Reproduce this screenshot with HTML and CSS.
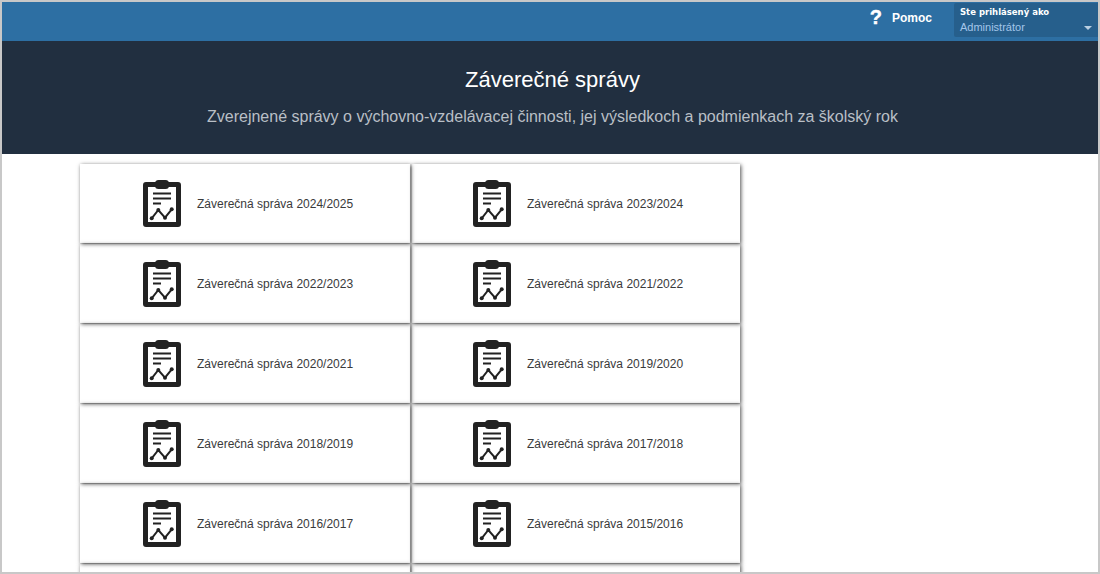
FILE: index.html
```html
<!DOCTYPE html>
<html lang="sk">
<head>
<meta charset="utf-8">
<title>Záverečné správy</title>
<link rel="stylesheet" href="styles.css">
</head>
<body>
<svg class="defs" width="0" height="0" aria-hidden="true">
  <symbol id="report" viewBox="0 0 38 47">
    <path fill="#222" fill-rule="evenodd" d="M3 2h32a3 3 0 0 1 3 3v39a3 3 0 0 1-3 3H3a3 3 0 0 1-3-3V5a3 3 0 0 1 3-3zM5 7v35h28V7z"/>
    <rect x="12" y="0" width="14" height="9" rx="3.500" fill="#222"/>
    <path fill="#222" d="M10 12.500h18v2H10zM10 17.500h18v2H10zM10 22.500h8v2h-8z"/>
    <path fill="none" stroke="#222" stroke-width="2" d="M8.700 38.300l6.600-8.300 6.700 7.700 6.700-8.400"/>
    <circle cx="8.700" cy="38.300" r="2" fill="#222"/><circle cx="15.300" cy="30" r="2" fill="#222"/><circle cx="22" cy="37.700" r="2" fill="#222"/><circle cx="28.700" cy="29.300" r="2" fill="#222"/>
  </symbol>
</svg>
<div class="frame">
  <header class="topbar">
    <a class="help"><span class="help-mark">?</span><span>Pomoc</span></a>
    <div class="user">
      <div class="user-label">Ste prihlásený ako</div>
      <div class="user-role">Administrátor</div>
      <span class="caret"></span>
    </div>
  </header>
  <section class="hero">
    <h1>Záverečné správy</h1>
    <p>Zverejnené správy o výchovno-vzdelávacej činnosti, jej výsledkoch a podmienkach za školský rok</p>
  </section>
  <main class="grid">
    <a class="card"><svg class="icon"><use href="#report"/></svg><span>Záverečná správa 2024/2025</span></a>
    <a class="card"><svg class="icon"><use href="#report"/></svg><span>Záverečná správa 2023/2024</span></a>
    <a class="card"><svg class="icon"><use href="#report"/></svg><span>Záverečná správa 2022/2023</span></a>
    <a class="card"><svg class="icon"><use href="#report"/></svg><span>Záverečná správa 2021/2022</span></a>
    <a class="card"><svg class="icon"><use href="#report"/></svg><span>Záverečná správa 2020/2021</span></a>
    <a class="card"><svg class="icon"><use href="#report"/></svg><span>Záverečná správa 2019/2020</span></a>
    <a class="card"><svg class="icon"><use href="#report"/></svg><span>Záverečná správa 2018/2019</span></a>
    <a class="card"><svg class="icon"><use href="#report"/></svg><span>Záverečná správa 2017/2018</span></a>
    <a class="card"><svg class="icon"><use href="#report"/></svg><span>Záverečná správa 2016/2017</span></a>
    <a class="card"><svg class="icon"><use href="#report"/></svg><span>Záverečná správa 2015/2016</span></a>
    <a class="card"></a>
    <a class="card"></a>
  </main>
</div>
</body>
</html>
```

FILE: styles.css
```css
html, body { margin: 0; padding: 0; background: #fff; }
body { font-family: "Liberation Sans", Arial, sans-serif; }
.defs { position: absolute; }
.frame {
  box-sizing: border-box;
  width: 1100px;
  height: 574px;
  border: 2px solid #c8c8c8;
  overflow: hidden;
  background: #fff;
}
.topbar {
  height: 39px;
  background: #2d6fa3;
  display: flex;
  justify-content: flex-end;
  box-sizing: border-box;
  padding: 1px 0 0;
}
.help {
  display: flex;
  align-items: center;
  gap: 10px;
  height: 29px;
  margin-right: 22px;
  color: #fff;
  font-size: 12px;
  font-weight: bold;
}
.help-mark { font-size: 20px; -webkit-text-stroke: 0.4px #fff; }
.user {
  position: relative;
  box-sizing: border-box;
  width: 144px;
  height: 34px;
  background: #265f8c;
  border-radius: 2px 0 0 2px;
  padding: 3px 0 0 6px;
}
.user-label {
  color: #fff;
  font-family: "DejaVu Sans", sans-serif;
  font-size: 8.500px;
  font-weight: bold;
  line-height: 13px;
}
.user-role {
  color: #a4c6ea;
  font-size: 11px;
  line-height: 15px;
  margin-top: 1px;
}
.caret {
  position: absolute;
  right: 6px;
  bottom: 7px;
  border-left: 4px solid transparent;
  border-right: 4px solid transparent;
  border-top: 4px solid #b9cfe2;
}
.hero {
  height: 113px;
  box-sizing: border-box;
  background: #212f40;
  text-align: center;
  padding: 26px 0 0 5px;
}
.hero h1 {
  margin: 0;
  color: #fff;
  font-size: 22px;
  font-weight: normal;
  line-height: 26px;
}
.hero p {
  margin: 13px 0 0;
  color: #b9bfc6;
  font-size: 16px;
  line-height: 22px;
}
.grid {
  display: grid;
  grid-template-columns: 330px 328px;
  grid-auto-rows: 79px;
  gap: 1px 2px;
  margin: 10px 0 0 78px;
  width: 660px;
}
.card {
  position: relative;
  display: flex;
  align-items: center;
  box-sizing: border-box;
  padding-left: 63px;
  background: #fff;
  color: #3a3a3a;
  font-size: 12px;
}
.card:nth-child(even) { padding-left: 61px; }
.card::after {
  content: "";
  position: absolute;
  inset: 0;
  z-index: 1;
  box-shadow: 1px 1px 4px rgba(0, 0, 0, 0.7);
}
.icon { width: 38px; height: 47px; margin-right: 16px; flex: none; }
```
